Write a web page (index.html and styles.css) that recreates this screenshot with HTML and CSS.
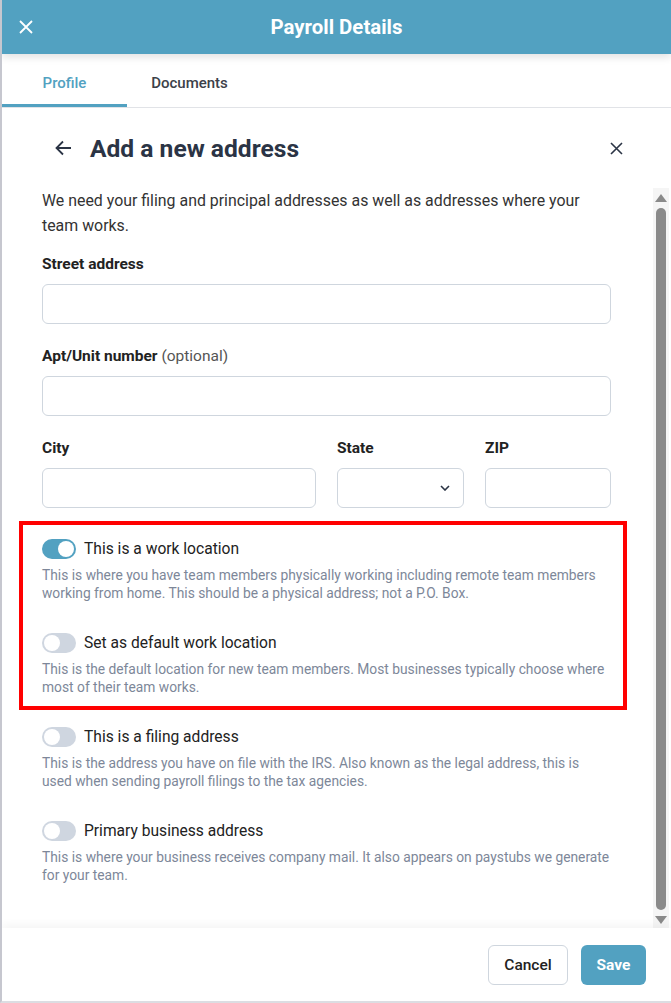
FILE: index.html
```html
<!DOCTYPE html>
<html lang="en">
<head>
    <meta charset="UTF-8">
    <meta name="viewport" content="width=device-width, initial-scale=1.0">
    <title>Payroll Details</title>
    <link rel="stylesheet" href="styles.css">
</head>
<body>
    <div class="panel">
        <!-- Top Bar -->
        <header class="topbar">
            <button class="icon-btn topbar-close" aria-label="Close">
                <svg width="14" height="14" viewBox="0 0 14 14"><path d="M1 1L13 13M13 1L1 13" stroke="#fff" stroke-width="1.8" fill="none"/></svg>
            </button>
            <h1 class="topbar-title">Payroll Details</h1>
        </header>

        <!-- Tabs -->
        <nav class="tabs">
            <div class="tab active">Profile</div>
            <div class="tab">Documents</div>
        </nav>

        <!-- Sheet Heading -->
        <div class="sheet-head">
            <button class="icon-btn" aria-label="Back">
                <svg width="17" height="16" viewBox="0 0 17 16"><path d="M16 8H2M8 1.5L1.5 8 8 14.5" stroke="#2b3445" stroke-width="1.8" fill="none"/></svg>
            </button>
            <h2 class="sheet-title">Add a new address</h2>
            <button class="icon-btn sheet-close" aria-label="Close">
                <svg width="13" height="13" viewBox="0 0 13 13"><path d="M1 1L12 12M12 1L1 12" stroke="#2b3445" stroke-width="1.6" fill="none"/></svg>
            </button>
        </div>

        <!-- Scrollable Form -->
        <div class="scroll-wrap">
            <div class="scroll-body">
                <p class="intro">We need your filing and principal addresses as well as addresses where your team works.</p>

                <div class="field">
                    <label class="field-label">Street address</label>
                    <input type="text" class="text-input">
                </div>

                <div class="field">
                    <label class="field-label">Apt/Unit number <span class="optional">(optional)</span></label>
                    <input type="text" class="text-input">
                </div>

                <div class="field-row">
                    <div class="field">
                        <label class="field-label">City</label>
                        <input type="text" class="text-input">
                    </div>
                    <div class="field">
                        <label class="field-label">State</label>
                        <div class="select-box">
                            <svg width="10" height="6" viewBox="0 0 10 6"><path d="M1 1l4 4 4-4" stroke="#2b3445" stroke-width="1.6" fill="none"/></svg>
                        </div>
                    </div>
                    <div class="field">
                        <label class="field-label">ZIP</label>
                        <input type="text" class="text-input">
                    </div>
                </div>

                <!-- Work location options -->
                <div class="highlight">
                    <div class="option">
                        <div class="option-head">
                            <span class="toggle on"></span>
                            <span class="option-label">This is a work location</span>
                        </div>
                        <p class="option-desc">This is where you have team members physically working including remote team members working from home. This should be a physical address; not a P.O. Box.</p>
                    </div>
                    <div class="option">
                        <div class="option-head">
                            <span class="toggle"></span>
                            <span class="option-label">Set as default work location</span>
                        </div>
                        <p class="option-desc">This is the default location for new team members. Most businesses typically choose where most of their team works.</p>
                    </div>
                </div>

                <div class="option">
                    <div class="option-head">
                        <span class="toggle"></span>
                        <span class="option-label">This is a filing address</span>
                    </div>
                    <p class="option-desc">This is the address you have on file with the IRS. Also known as the legal address, this is used when sending payroll filings to the tax agencies.</p>
                </div>

                <div class="option">
                    <div class="option-head">
                        <span class="toggle"></span>
                        <span class="option-label">Primary business address</span>
                    </div>
                    <p class="option-desc">This is where your business receives company mail. It also appears on paystubs we generate for your team.</p>
                </div>
            </div>

            <!-- Scrollbar -->
            <div class="scrollbar">
                <span class="arrow up"></span>
                <span class="thumb"></span>
                <span class="arrow down"></span>
            </div>
        </div>

        <!-- Footer -->
        <footer class="footer">
            <button class="btn btn-secondary">Cancel</button>
            <button class="btn btn-primary">Save</button>
        </footer>
    </div>
</body>
</html>
```

FILE: styles.css
```css
/* Base */
body {
    margin: 0;
    padding: 0;
    font-family: Roboto, 'Noto Sans', sans-serif;
    background: #fff;
    color: #222;
}

.panel {
    height: 1003px;
    box-sizing: border-box;
    border-left: 2px solid #c6c7cf;
    border-bottom: 2px solid #dcdde2;
    display: flex;
    flex-direction: column;
    overflow: hidden;
}

.icon-btn {
    background: none;
    border: none;
    padding: 0;
    cursor: pointer;
    display: flex;
    align-items: center;
    justify-content: center;
}

/* Top Bar */
.topbar {
    position: relative;
    z-index: 2;
    height: 54px;
    flex-shrink: 0;
    background: #52a1c1;
    display: flex;
    align-items: center;
    justify-content: center;
    box-shadow: 0 3px 8px rgba(0,0,0,0.12);
}

.topbar-close {
    position: absolute;
    left: 17px;
    top: 20px;
}

.topbar-title {
    margin: 0;
    color: #fff;
    font-size: 20.4px;
    font-weight: 700;
}

/* Tabs */
.tabs {
    height: 53px;
    flex-shrink: 0;
    display: flex;
    border-bottom: 1px solid #e1e3e7;
}

.tab {
    width: 125px;
    display: flex;
    align-items: center;
    justify-content: center;
    font-size: 15px;
    font-weight: 500;
    color: #3c4149;
    box-sizing: border-box;
    border-bottom: 3px solid transparent;
    padding-top: 7px;
}

.tab.active {
    color: #52a1c1;
    border-bottom-color: #52a1c1;
}

/* Sheet Heading */
.sheet-head {
    height: 80px;
    flex-shrink: 0;
    display: flex;
    align-items: center;
    padding: 0 48px 0 53px;
    gap: 18px;
}

.sheet-title {
    margin: 0;
    flex: 1;
    font-size: 24.6px;
    font-weight: 700;
    color: #2b3445;
}

/* Scroll Area */
.scroll-wrap {
    flex: 1;
    display: flex;
    min-height: 0;
}

.scroll-body {
    flex: 1;
    padding: 0 42px 0 40px;
}

.intro {
    margin: 0 0 14px;
    font-size: 15.9px;
    line-height: 25px;
    color: #333;
}

.field {
    display: flex;
    flex-direction: column;
    margin-bottom: 20px;
}

.field-label {
    font-size: 15.5px;
    font-weight: 700;
    color: #222;
    line-height: 24px;
    margin-bottom: 8px;
}

.optional {
    font-weight: 400;
    color: #555;
}

.text-input,
.select-box {
    height: 40px;
    box-sizing: border-box;
    border: 1px solid #cfd6de;
    border-radius: 6px;
    background: #fff;
    font-size: 15px;
    padding: 0 12px;
    outline: none;
}

.select-box {
    display: flex;
    align-items: center;
    justify-content: flex-end;
    padding-right: 13px;
}

.field-row {
    display: grid;
    grid-template-columns: 1fr 127px 126px;
    gap: 21px;
}

/* Options */
.highlight {
    margin: -7px -16px 16px -23px;
    padding: 13px 12px 0 19px;
    border: 4px solid #ff0000;
}

.highlight .option:last-child {
    margin-bottom: 10px;
}

.option {
    margin-bottom: 30px;
}

.option-head {
    display: flex;
    align-items: center;
    gap: 8px;
    height: 22px;
}

.toggle {
    position: relative;
    width: 34px;
    height: 20px;
    border-radius: 10px;
    background: #cfd6e0;
    flex-shrink: 0;
}

.toggle::after {
    content: '';
    position: absolute;
    left: 2px;
    top: 2px;
    width: 16px;
    height: 16px;
    border-radius: 50%;
    background: #fff;
}

.toggle.on {
    background: #52a1c1;
}

.toggle.on::after {
    left: 16px;
}

.option-label {
    font-size: 15.6px;
    color: #222;
}

.option-desc {
    margin: 6px 0 0;
    font-size: 13.8px;
    line-height: 18px;
    color: #7d8799;
}

/* Scrollbar */
.scrollbar {
    width: 16px;
    margin-right: 2px;
    background: #f5f5f5;
    display: flex;
    flex-direction: column;
    align-items: center;
    padding: 6px 0 4px;
    gap: 6px;
}

.arrow {
    width: 0;
    height: 0;
    border-left: 6px solid transparent;
    border-right: 6px solid transparent;
}

.arrow.up {
    border-bottom: 8px solid #8a8a8a;
}

.arrow.down {
    border-top: 8px solid #8a8a8a;
}

.thumb {
    flex: 1;
    width: 10px;
    border-radius: 5px;
    background: #8a8a8a;
}

/* Footer */
.footer {
    position: relative;
    height: 73px;
    flex-shrink: 0;
    display: flex;
    align-items: center;
    justify-content: flex-end;
    gap: 13px;
    padding-right: 25px;
    box-shadow: 0 -4px 8px rgba(0,0,0,0.04);
}

.btn {
    height: 40px;
    border-radius: 6px;
    font-family: Roboto, 'Noto Sans', sans-serif;
    font-size: 15.5px;
    cursor: pointer;
    padding: 0 10px;
}

.btn-secondary {
    background: #fff;
    border: 1px solid #cfd6de;
    color: #222;
    width: 80px;
    font-weight: 500;
}

.btn-primary {
    background: #52a1c1;
    border: none;
    color: #fff;
    font-weight: 700;
    width: 65px;
}
```
